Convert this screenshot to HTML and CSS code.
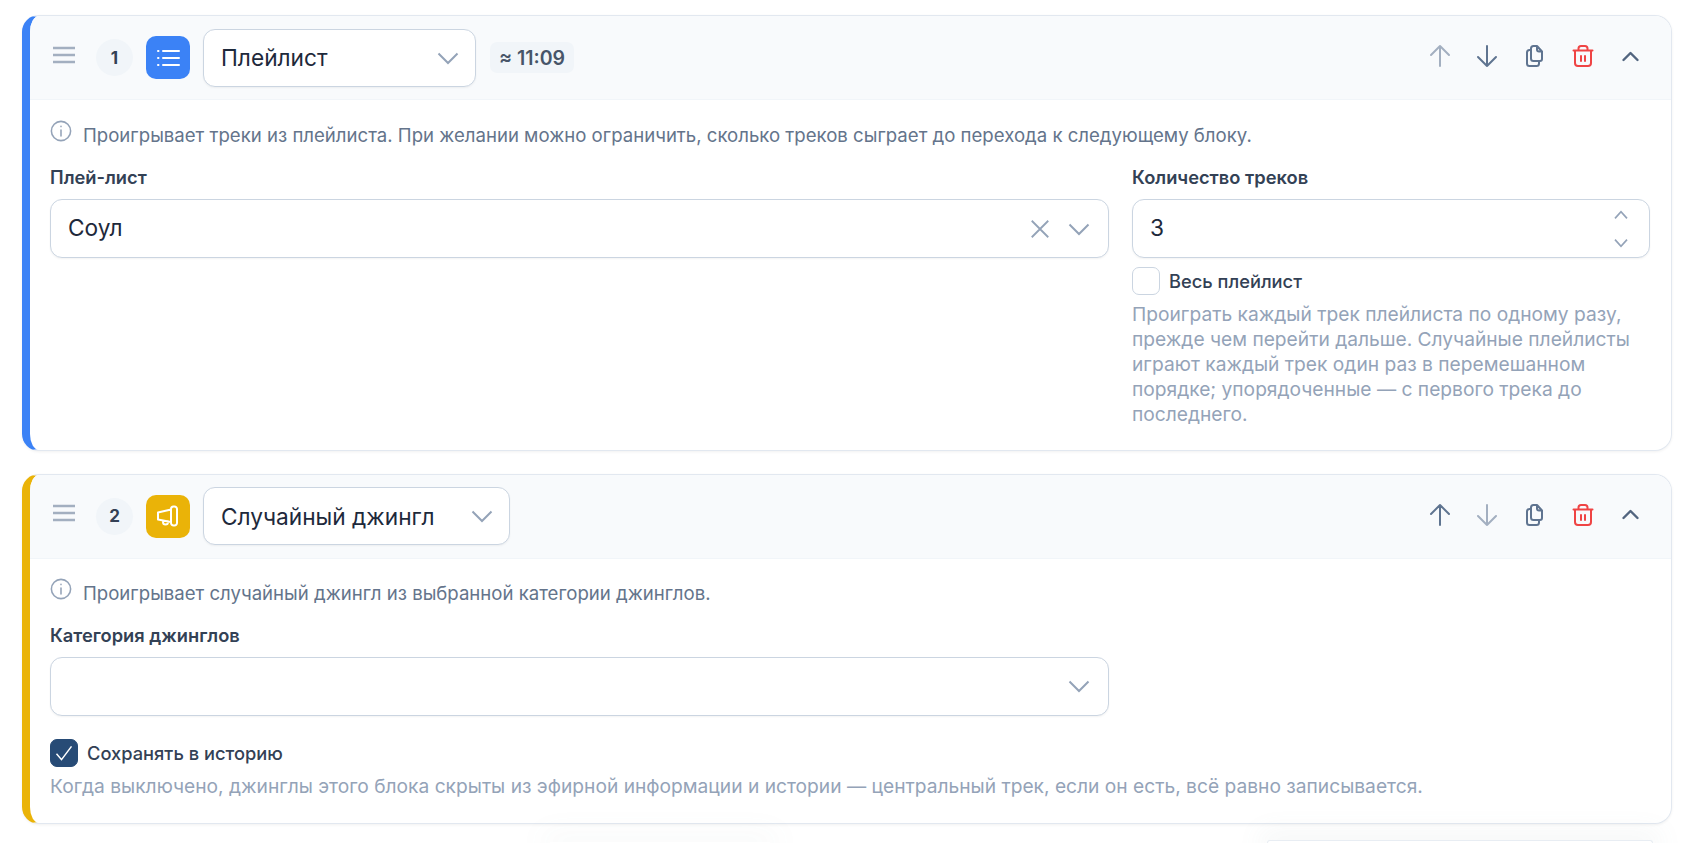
FILE: index.html
```html
<!DOCTYPE html>
<html lang="ru">

<head>
    <meta charset="UTF-8">
    <meta name="viewport" content="width=device-width, initial-scale=1.0">
    <title>Блоки расписания</title>
    <link rel="stylesheet" href="styles.css">
</head>

<body>
    <main class="blocks">
        <!-- Блок 1 -->
        <section class="block block-blue">
            <header class="block-head">
                <svg class="handle" viewBox="0 0 24 24"><path d="M1 5h22M1 12h22M1 19h22"/></svg>
                <span class="num">1</span>
                <span class="type-icon type-blue">
                    <svg viewBox="0 0 24 24"><path d="M7 5h16M7 12h16M7 19h16M2 5h.5M2 12h.5M2 19h.5"/></svg>
                </span>
                <div class="type-select type-select-1">
                    <span>Плейлист</span>
                    <svg class="chev" viewBox="0 0 24 24"><path d="M2.500 7.500l9.500 9.500 9.500-9.500"/></svg>
                </div>
                <span class="duration">≈ 11:09</span>
                <div class="tools">
                    <button class="tool tool-off"><svg viewBox="0 0 24 24"><path d="M12 22V2M3 11l9-9 9 9"/></svg></button>
                    <button class="tool"><svg viewBox="0 0 24 24"><path d="M12 2v20M3 13l9 9 9-9"/></svg></button>
                    <button class="tool"><svg viewBox="0 0 24 24"><path d="M8 4.500A2.500 2.500 0 0 1 10.500 2H14l5 5.500V15a2 2 0 0 1-2 2h-6.500A2.500 2.500 0 0 1 8 14.500zM14 2v3.500a2 2 0 0 0 2 2h3M8 6H6.500A2.500 2.500 0 0 0 4 8.500v11A2.500 2.500 0 0 0 6.500 22h7a2.500 2.500 0 0 0 2.500-2.500V17"/></svg></button>
                    <button class="tool tool-del"><svg viewBox="0 0 24 24"><path d="M2.500 6.500h19M4 6.500V19a3 3 0 0 0 3 3h10a3 3 0 0 0 3-3V6.500M7.500 6.500V4.500A2.500 2.500 0 0 1 10 2h4a2.500 2.500 0 0 1 2.500 2.500v2M10 12v5M14 12v5"/></svg></button>
                    <button class="tool tool-fold"><svg viewBox="0 0 24 24"><path d="M4 16l8-8 8 8"/></svg></button>
                </div>
            </header>
            <div class="block-body">
                <p class="info">
                    <svg viewBox="0 0 24 24"><circle cx="12" cy="12" r="10.500"/><path d="M12 11v6.500M12 6.800v.4"/></svg>
                    <span>Проигрывает треки из плейлиста. При желании можно ограничить, сколько треков сыграет до перехода к следующему блоку.</span>
                </p>
                <div class="fields">
                    <div class="field">
                        <label class="label">Плей-лист</label>
                        <div class="input">
                            <span class="value">Соул</span>
                            <svg class="clear" viewBox="0 0 24 24"><path d="M3 3l18 18M21 3L3 21"/></svg>
                            <svg class="chev" viewBox="0 0 24 24"><path d="M2.500 7.500l9.500 9.500 9.500-9.500"/></svg>
                        </div>
                    </div>
                    <div class="field">
                        <label class="label">Количество треков</label>
                        <div class="input input-number">
                            <span class="value">3</span>
                            <div class="spin">
                                <svg viewBox="0 0 24 24"><path d="M3 17l9-10 9 10"/></svg>
                                <svg viewBox="0 0 24 24"><path d="M3 7l9 10 9-10"/></svg>
                            </div>
                        </div>
                        <div class="check-row check-row-tight">
                            <span class="check"></span>
                            <span class="check-label">Весь плейлист</span>
                        </div>
                        <p class="help">Проиграть каждый трек плейлиста по одному разу, прежде чем перейти дальше. Случайные плейлисты играют каждый трек один раз в перемешанном порядке; упорядоченные — с первого трека до последнего.</p>
                    </div>
                </div>
            </div>
        </section>

        <!-- Блок 2 -->
        <section class="block block-yellow">
            <header class="block-head">
                <svg class="handle" viewBox="0 0 24 24"><path d="M1 5h22M1 12h22M1 19h22"/></svg>
                <span class="num">2</span>
                <span class="type-icon type-yellow">
                    <svg viewBox="0 0 24 24"><path d="M2 8.500L15 5.500V18L2 15.500zM15 5a2.500 2.500 0 0 1 2.500-2.500h1A2.500 2.500 0 0 1 21 5v14a2.500 2.500 0 0 1-2.500 2.500h-1A2.500 2.500 0 0 1 15 19v-1M7 16.500v1.500a2.500 2.500 0 0 0 5 0v-.8"/></svg>
                </span>
                <div class="type-select type-select-2">
                    <span>Случайный джингл</span>
                    <svg class="chev" viewBox="0 0 24 24"><path d="M2.500 7.500l9.500 9.500 9.500-9.500"/></svg>
                </div>
                <div class="tools">
                    <button class="tool"><svg viewBox="0 0 24 24"><path d="M12 22V2M3 11l9-9 9 9"/></svg></button>
                    <button class="tool tool-off"><svg viewBox="0 0 24 24"><path d="M12 2v20M3 13l9 9 9-9"/></svg></button>
                    <button class="tool"><svg viewBox="0 0 24 24"><path d="M8 4.500A2.500 2.500 0 0 1 10.500 2H14l5 5.500V15a2 2 0 0 1-2 2h-6.500A2.500 2.500 0 0 1 8 14.500zM14 2v3.500a2 2 0 0 0 2 2h3M8 6H6.500A2.500 2.500 0 0 0 4 8.500v11A2.500 2.500 0 0 0 6.500 22h7a2.500 2.500 0 0 0 2.500-2.500V17"/></svg></button>
                    <button class="tool tool-del"><svg viewBox="0 0 24 24"><path d="M2.500 6.500h19M4 6.500V19a3 3 0 0 0 3 3h10a3 3 0 0 0 3-3V6.500M7.500 6.500V4.500A2.500 2.500 0 0 1 10 2h4a2.500 2.500 0 0 1 2.500 2.500v2M10 12v5M14 12v5"/></svg></button>
                    <button class="tool tool-fold"><svg viewBox="0 0 24 24"><path d="M4 16l8-8 8 8"/></svg></button>
                </div>
            </header>
            <div class="block-body">
                <p class="info">
                    <svg viewBox="0 0 24 24"><circle cx="12" cy="12" r="10.500"/><path d="M12 11v6.500M12 6.800v.4"/></svg>
                    <span>Проигрывает случайный джингл из выбранной категории джинглов.</span>
                </p>
                <div class="fields">
                    <div class="field">
                        <label class="label">Категория джинглов</label>
                        <div class="input">
                            <span class="value"></span>
                            <svg class="chev" viewBox="0 0 24 24"><path d="M2.500 7.500l9.500 9.500 9.500-9.500"/></svg>
                        </div>
                    </div>
                </div>
                <div class="check-row">
                    <span class="check check-on">
                        <svg viewBox="0 0 24 24"><path d="M3 13l6 7L21 4"/></svg>
                    </span>
                    <span class="check-label">Сохранять в историю</span>
                </div>
                <p class="help">Когда выключено, джинглы этого блока скрыты из эфирной информации и истории — центральный трек, если он есть, всё равно записывается.</p>
            </div>
        </section>
    </main>

    <!-- плавающие панели снизу, за краем окна -->
    <div class="float-panel"></div>
    <div class="float-glow"></div>
</body>

</html>
```

FILE: styles.css
```css
* {
    box-sizing: border-box;
}

html,
body {
    height: 100%;
    overflow: hidden;
}

body {
    margin: 0;
    background-color: #ffffff;
    font-family: "Inter", "Noto Sans", sans-serif;
    color: #1e293b;
    position: relative;
}

.blocks {
    display: flex;
    flex-direction: column;
    gap: 23px;
    padding: 15px 21px 0 22px;
}

.block {
    background-color: #ffffff;
    border: 1px solid #e2e8f0;
    border-left: 8px solid #3b82f6;
    border-radius: 17px;
    box-shadow: 0 1px 3px rgba(0, 0, 0, 0.06);
    overflow: hidden;
}

.block-blue {
    border-left-color: #3b82f6;
}

.block-yellow {
    border-left-color: #eab308;
}

.block-head {
    display: flex;
    align-items: center;
    height: 84px;
    padding: 0 22px;
    background-color: #f8fafc;
    border-bottom: 1px solid #f1f5f9;
}

.handle {
    width: 24px;
    height: 24px;
    fill: none;
    stroke: #a3afc0;
    stroke-width: 2.500;
    margin: 0 20px 6px 0;
}

.num {
    width: 37px;
    height: 37px;
    border-radius: 50%;
    background-color: #f1f5f9;
    color: #334155;
    font-size: 17px;
    font-weight: 700;
    display: flex;
    align-items: center;
    justify-content: center;
    margin-right: 13px;
}

.type-icon {
    width: 44px;
    height: 43px;
    border-radius: 10px;
    display: flex;
    align-items: center;
    justify-content: center;
    margin-right: 13px;
}

.type-icon svg {
    width: 24px;
    height: 24px;
    fill: none;
    stroke: #ffffff;
    stroke-width: 2;
    stroke-linecap: round;
    stroke-linejoin: round;
}

.type-blue {
    background-color: #3b82f6;
}

.type-yellow {
    background-color: #eab308;
}

.type-select {
    height: 58px;
    display: flex;
    align-items: center;
    justify-content: space-between;
    padding: 0 15px 0 17px;
    background-color: #ffffff;
    border: 1px solid #cbd5e1;
    border-radius: 12px;
    box-shadow: 0 1px 2px rgba(0, 0, 0, 0.05);
    font-size: 22.700px;
    color: #1e293b;
}

.type-select-1 {
    width: 273px;
}

.type-select-2 {
    width: 307px;
}

.chev {
    width: 24px;
    height: 24px;
    fill: none;
    stroke: #94a3b8;
    stroke-width: 2;
    flex-shrink: 0;
}

.duration {
    margin-left: 14px;
    padding: 0 9px;
    height: 31px;
    display: flex;
    align-items: center;
    background-color: #f1f5f9;
    border-radius: 7px;
    color: #475569;
    font-size: 19.500px;
    font-weight: 600;
}

.tools {
    display: flex;
    align-items: center;
    gap: 4.750px;
    margin: 0 -3px 3px auto;
}

.tool {
    width: 43px;
    height: 43px;
    padding: 0;
    border: none;
    background: none;
    display: flex;
    align-items: center;
    justify-content: center;
}

.tool svg {
    width: 24px;
    height: 24px;
    fill: none;
    stroke: #5f7490;
    stroke-width: 2;
    stroke-linecap: round;
    stroke-linejoin: round;
}

.tool-off svg {
    stroke: #a3afc0;
}

.tool-del svg {
    stroke: #ef4444;
}

.tool-fold svg {
    stroke: #52657f;
    stroke-width: 2.800;
    width: 21px;
    height: 21px;
}

.block-body {
    padding: 20px 22px 22.500px 20px;
}

.block-yellow .block-body {
    padding-top: 19px;
    padding-bottom: 24px;
}

.info {
    margin: 0 0 17px;
    display: flex;
    align-items: flex-start;
    gap: 11px;
    color: #64748b;
    font-size: 18.600px;
    line-height: 30px;
}

.info svg {
    width: 22px;
    height: 22px;
    fill: none;
    stroke: #94a3b8;
    stroke-width: 1.700;
    stroke-linecap: round;
    flex-shrink: 0;
}

.fields {
    display: grid;
    grid-template-columns: 1059px 518px;
    gap: 23px;
}

.block-yellow .fields {
    grid-template-columns: 1059px;
}

.label {
    display: block;
    font-size: 18.300px;
    font-weight: 600;
    color: #334155;
    line-height: 20px;
    margin-bottom: 12px;
}

.input {
    height: 59px;
    display: flex;
    align-items: center;
    padding: 0 17px;
    background-color: #ffffff;
    border: 1px solid #cbd5e1;
    border-radius: 12px;
    box-shadow: 0 1px 2px rgba(0, 0, 0, 0.05);
    font-size: 22.700px;
}

.value {
    flex: 1;
    color: #1e293b;
    padding-bottom: 3px;
}

.clear {
    width: 22px;
    height: 22px;
    fill: none;
    stroke: #94a3b8;
    stroke-width: 2;
    margin-right: 16px;
}

.spin {
    display: flex;
    flex-direction: column;
    gap: 12px;
    margin-right: 3px;
}

.spin svg {
    width: 16px;
    height: 16px;
    fill: none;
    stroke: #94a3b8;
    stroke-width: 2.500;
    display: block;
}

.check-row {
    display: flex;
    align-items: center;
    gap: 9px;
    margin-top: 23px;
}

.check-row-tight {
    margin-top: 9px;
}

.check {
    width: 28px;
    height: 28px;
    border: 1px solid #cbd5e1;
    border-radius: 7px;
    background-color: #ffffff;
    display: flex;
    align-items: center;
    justify-content: center;
}

.check-on {
    background-color: #274b76;
    border-color: #274b76;
}

.check-on svg {
    width: 20px;
    height: 20px;
    fill: none;
    stroke: #ffffff;
    stroke-width: 1.800;
}

.check-label {
    font-size: 18.300px;
    font-weight: 500;
    color: #334155;
}

.help {
    margin: 7px 0 0;
    font-size: 19.200px;
    line-height: 25px;
    color: #94a3b8;
}

.float-panel {
    position: absolute;
    top: 840px;
    left: 1267px;
    width: 386px;
    height: 3px;
    background-color: #ffffff;
    border: 1px solid #e8edf3;
    border-bottom: none;
    border-radius: 6px 6px 0 0;
    box-shadow: 0 0 26px 8px rgba(120, 135, 135, 0.08);
}

.float-glow {
    position: absolute;
    top: 842px;
    left: 550px;
    width: 220px;
    height: 1px;
    box-shadow: 0 0 30px 8px rgba(120, 135, 135, 0.06);
}
```
